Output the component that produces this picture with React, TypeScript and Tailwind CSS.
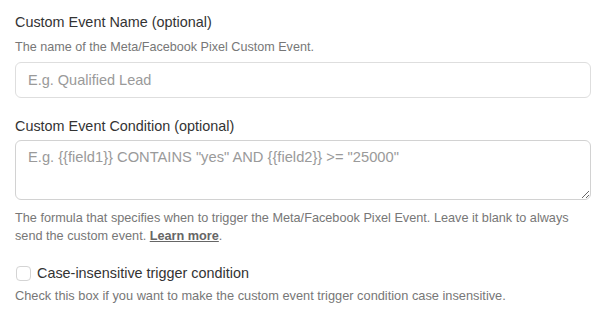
import React from "react";

export default function App() {
  return (
    <div className="w-[607px] h-[316px] bg-white pl-[15px] pr-[16px] pt-[12px] font-['Liberation_Sans',Arial,sans-serif]">
      <div className="text-[14.4px] leading-[20px] text-[#333333]">Custom Event Name (optional)</div>
      <div className="mt-[7px] text-[12.6px] leading-[16px] text-[#777777]">
        The name of the Meta/Facebook Pixel Custom Event.
      </div>
      <input
        type="text"
        placeholder="E.g. Qualified Lead"
        className="mt-[7px] block w-full h-[36px] rounded-[6px] border border-[#dedede] bg-white px-[12px] text-[14.5px] text-[#333333] placeholder:text-[#9a9a9a] outline-none"
      />
      <div className="mt-[18px] text-[14.4px] leading-[20px] text-[#333333]">Custom Event Condition (optional)</div>
      <textarea
        placeholder={'E.g. {{field1}} CONTAINS "yes" AND {{field2}} >= "25000"'}
        className="mt-[4px] block w-full h-[60px] rounded-[6px] border border-[#d2d2d2] bg-white px-[12px] py-[6px] text-[14.7px] leading-[20px] text-[#333333] placeholder:text-[#9a9a9a] outline-none resize-y"
      />
      <div className="mt-[9px] text-[12.7px] leading-[18px] text-[#777777] whitespace-nowrap">
        The formula that specifies when to trigger the Meta/Facebook Pixel Event. Leave it blank to always
        <br />
        send the custom event. <a className="font-bold underline text-[#666666]">Learn more</a>.
      </div>
      <label className="mt-[18px] flex items-center gap-[6px] h-[20px]">
        <span className="ml-[1px] w-[15px] h-[15px] rounded-[4px] border border-[#d4d4d4] bg-white shrink-0" />
        <span className="text-[14.4px] leading-[20px] text-[#333333]">Case-insensitive trigger condition</span>
      </label>
      <div className="mt-[5px] text-[12.8px] leading-[16px] text-[#777777]">
        Check this box if you want to make the custom event trigger condition case insensitive.
      </div>
    </div>
  );
}
